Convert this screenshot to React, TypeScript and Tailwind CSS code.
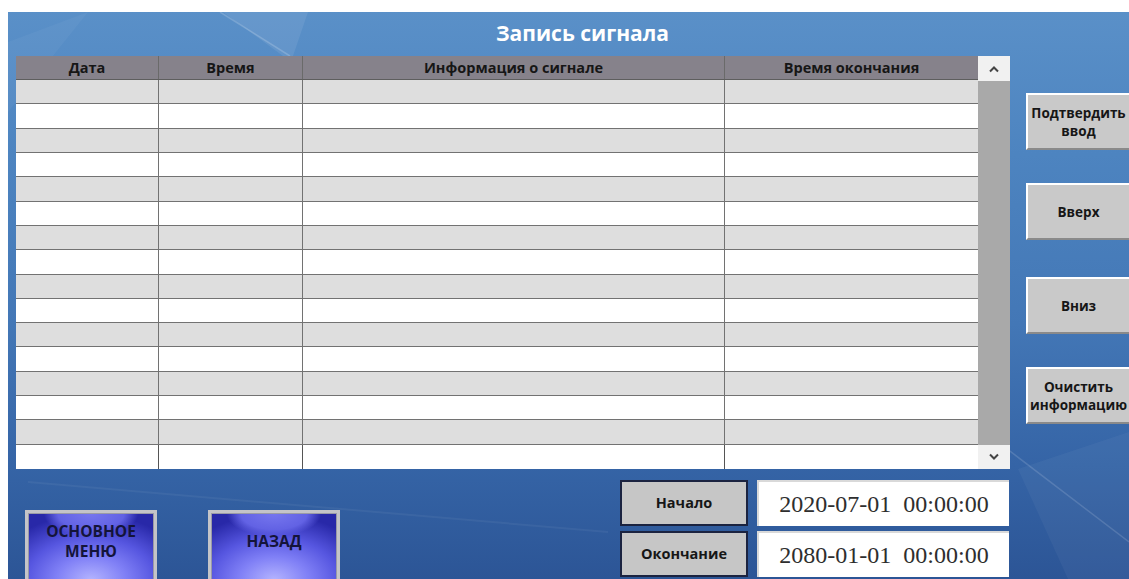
import React from "react";

const ui = { fontFamily: '"Open Sans", "DejaVu Sans", sans-serif' };
const serif = { fontFamily: '"Liberation Serif", "DejaVu Serif", serif' };

const columns = ["Дата", "Время", "Информация о сигнале", "Время окончания"];
const ROWS = 16;

// Decorative light streaks across the blue panel
function Streaks() {
  return (
    <svg
      className="pointer-events-none absolute inset-0"
      width="1121"
      height="567"
      viewBox="0 0 1121 567"
    >
      <polygon points="215,0 300,0 285,44 275,44" fill="#ffffff" opacity="0.08" />
      <line x1="212" y1="0" x2="282" y2="44" stroke="#ffffff" strokeOpacity="0.18" strokeWidth="1.5" />
      <polygon points="0,30 80,0 0,100" fill="#ffffff" opacity="0.04" />
      <line x1="990" y1="430" x2="1121" y2="530" stroke="#ffffff" strokeOpacity="0.14" strokeWidth="1.5" />
      <polygon points="1010,457 1121,420 1121,567 1060,567" fill="#ffffff" opacity="0.04" />
      <line x1="20" y1="470" x2="600" y2="520" stroke="#ffffff" strokeOpacity="0.05" strokeWidth="2" />
    </svg>
  );
}

function SideButton({ children, className }: { children: React.ReactNode; className: string }) {
  return (
    <div
      className={`flex h-[57px] w-[103px] items-center justify-center border-t-2 border-l-2 border-t-white border-l-white border-b-2 border-b-[#8a8a8a] bg-[#c9c9c9] text-center text-[13.5px] leading-[18px] font-bold whitespace-nowrap text-[#161616] ${className}`}
    >
      {children}
    </div>
  );
}

function MenuButton({ children }: { children: React.ReactNode }) {
  return (
    <div className="h-[74px] w-[132px] border-[3px] border-[#c4c4c8] bg-[#9a9aa6] p-px">
      <div className="flex h-full w-full items-center justify-center bg-[radial-gradient(ellipse_38%_34%_at_50%_0%,#7676ee_0%,#6262e4_70%,transparent_100%),radial-gradient(ellipse_80%_100%_at_50%_100%,#b4b4ff_0%,#8080f6_35%,#5656e0_65%,#2828a8_100%)] pb-[12px] text-center text-[15.5px] leading-[20px] font-bold text-[#14143a]">
        {children}
      </div>
    </div>
  );
}

function LabelButton({ children }: { children: React.ReactNode }) {
  return (
    <div className="flex h-[46px] w-[128px] items-center justify-center border-2 border-[#1b2340] bg-[#c6c6c6] text-[14.5px] font-bold text-[#161616]">
      {children}
    </div>
  );
}

function DateBox({ value }: { value: string }) {
  return (
    <div
      className="flex h-[46px] w-[252px] items-center justify-center border-t-2 border-l-2 border-[#d9d9d9] bg-white text-[24px] whitespace-pre text-[#2e2e2e]"
      style={serif}
    >
      {value}
    </div>
  );
}

export default function App() {
  return (
    <div className="h-[579px] w-[1129px] overflow-hidden bg-white pt-[12px] pl-[8px]" style={ui}>
      <div className="relative h-[567px] w-[1121px] overflow-hidden bg-[linear-gradient(180deg,#5a90c8_0%,#4d84c0_25%,#4377b6_55%,#3564a6_80%,#2c5596_100%)]">
        <Streaks />

        <div className="relative flex h-[44px] items-center justify-center pl-[28px] text-[21px] font-bold text-white">
          Запись сигнала
        </div>

        <div className="relative flex items-start">
          {/* table with scrollbar */}
          <div className="ml-[8px] flex h-[413px] w-[994px]">
            <div className="flex w-[962px] flex-col">
              <div className="grid h-[24px] grid-cols-[143px_144px_422px_253px] border-b border-[#5e5e5e] bg-[#86828b]">
                {columns.map((c) => (
                  <div
                    key={c}
                    className="flex items-center justify-center border-r border-[#6a6a6a] text-[14.5px] font-bold text-[#161616] last:border-r-0"
                  >
                    {c}
                  </div>
                ))}
              </div>
              <div className="grid flex-1 grid-cols-[143px_144px_422px_253px] grid-rows-[repeat(16,1fr)]">
                {Array.from({ length: ROWS * 4 }).map((_, i) => {
                  const row = Math.floor(i / 4);
                  const col = i % 4;
                  return (
                    <div
                      key={i}
                      className={`${row % 2 === 0 ? "bg-[#dedede]" : "bg-white"} ${
                        row < ROWS - 1 ? "border-b border-[#727272]" : ""
                      } ${col < 3 ? "border-r border-[#555555]" : ""}`}
                    />
                  );
                })}
              </div>
            </div>
            <div className="flex w-[32px] flex-col bg-[#f1f1f1]">
              <div className="flex h-[25px] items-center justify-center">
                <svg width="12" height="8" viewBox="0 0 12 8">
                  <path d="M2 6.5 L6 2.5 L10 6.5" fill="none" stroke="#444" strokeWidth="2" />
                </svg>
              </div>
              <div className="flex-1 bg-[#a9a9a9]" />
              <div className="flex h-[24px] items-center justify-center">
                <svg width="12" height="8" viewBox="0 0 12 8">
                  <path d="M2 1.5 L6 5.5 L10 1.5" fill="none" stroke="#444" strokeWidth="2" />
                </svg>
              </div>
            </div>
          </div>

          {/* side actions */}
          <div className="ml-[16px] flex flex-col">
            <SideButton className="mt-[37px]">
              Подтвердить
              <br />
              ввод
            </SideButton>
            <SideButton className="mt-[33px]">Вверх</SideButton>
            <SideButton className="mt-[37px]">Вниз</SideButton>
            <SideButton className="mt-[33px]">
              Очистить
              <br />
              информацию
            </SideButton>
          </div>
        </div>

        <div className="relative flex items-start">
          <div className="ml-[17px] mt-[41px] flex gap-[51px]">
            <MenuButton>
              ОСНОВНОЕ
              <br />
              МЕНЮ
            </MenuButton>
            <MenuButton>НАЗАД</MenuButton>
          </div>
          <div className="ml-[280px] mt-[11px] grid grid-cols-[128px_252px] content-start gap-x-[9px] gap-y-[5px]">
            <LabelButton>Начало</LabelButton>
            <DateBox value="2020-07-01  00:00:00" />
            <LabelButton>Окончание</LabelButton>
            <DateBox value="2080-01-01  00:00:00" />
          </div>
        </div>
      </div>
    </div>
  );
}
